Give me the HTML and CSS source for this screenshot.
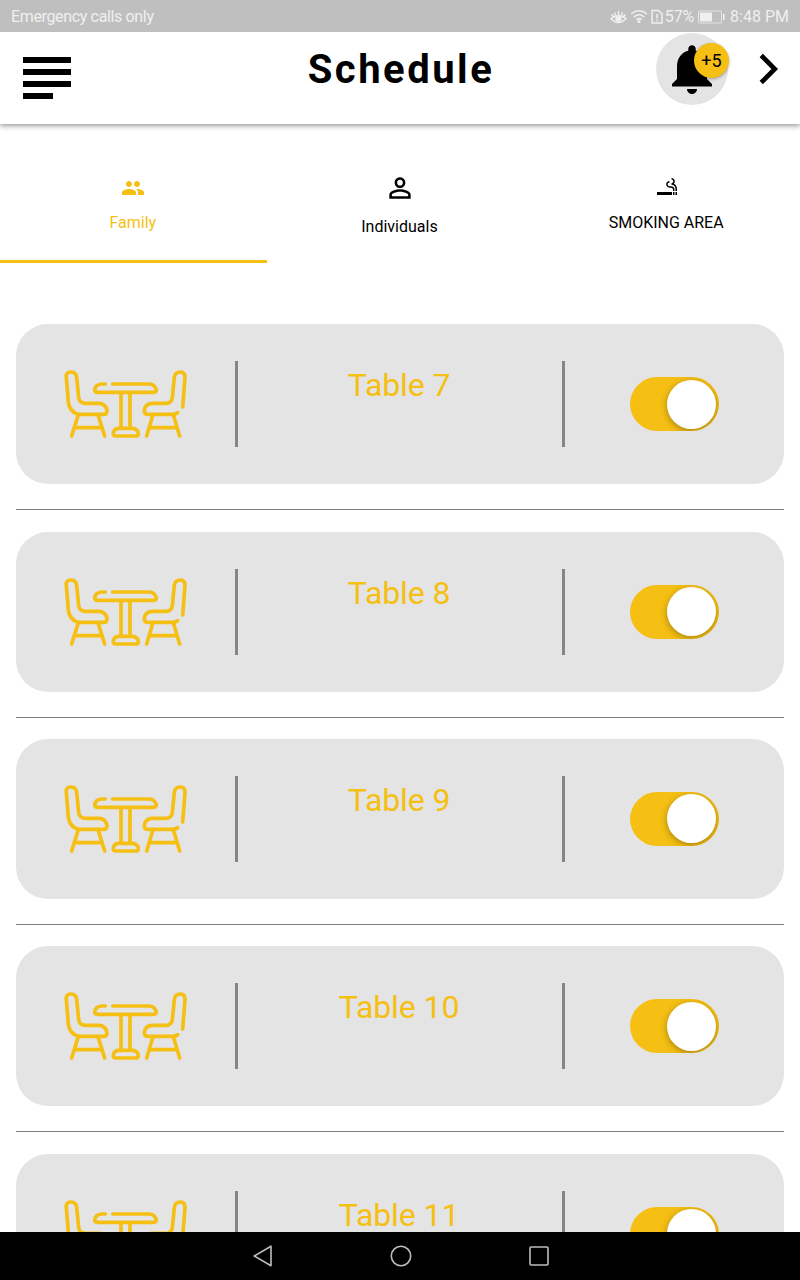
FILE: index.html
```html
<!DOCTYPE html>
<html lang="en">
<head>
<meta charset="utf-8">
<title>Schedule</title>
<link rel="stylesheet" href="styles.css">
</head>
<body>
<svg class="defs" aria-hidden="true">
  <symbol id="dining" viewBox="0 0 420 270">
    <g fill="none" stroke="currentColor" stroke-width="11" stroke-linecap="round" stroke-linejoin="round">
      <path d="M31 52Q29 36 45 36Q60 36 62 52L68 112Q70 130 90 130H130Q150 132 153 152Q153 163 142 163H72Q42 160 37 126Z"/>
      <path d="M67 164L47 228M126 164L146 228M60 203H135"/>
      <path d="M148 72H138Q118 73 116 90Q117 97 126 97H292Q301 96 301 89Q296 73 280 72H170"/>
      <path d="M195 98V203M222 98V203M187 205H232Q246 208 247 221Q246 228 240 228H178Q171 227 172 219Q174 206 187 205"/>
      <path d="M380 141L387 54Q388 36 373 36Q357 36 355 52L349 112Q347 130 329 130H288Q266 132 265 152Q265 163 277 163H350Q360 163 365 158"/>
      <path d="M291 164L272 228M352 164L371 228M283 203H361"/>
    </g>
  </symbol>
</svg>
<div class="screen">
  <div class="status">
    <span class="carrier">Emergency calls only</span>
    <div class="indicators">
      <svg class="eye" width="17" height="16" viewBox="0 0 17 16" fill="none" stroke="currentColor" stroke-width="1.500"><path d="M1.500 5.500Q3 8 5 8M15.500 5.500Q14 8 12 8M1 9.500Q8.500 3.500 16 9.500Q8.500 17.500 1 9.500ZM8.500 5.500V2M5.500 6L4.500 3.500M11.500 6L12.500 3.500"/><circle cx="8.500" cy="9.700" r="2.400" fill="currentColor"/></svg>
      <svg class="wifi" width="18" height="16" viewBox="0 0 18 16" fill="none" stroke="currentColor" stroke-width="1.500"><path d="M1 5Q9-1.500 17 5M3.700 8Q9 3.500 14.300 8M6.300 10.800Q9 8.500 11.700 10.800"/><circle cx="9" cy="12.500" r=".8" fill="currentColor"/></svg>
      <svg class="sim" width="12" height="16" viewBox="0 0 12 16" fill="none" stroke="currentColor" stroke-width="1.500"><path d="M1 1.500H7.500L11 5V14H1ZM6 5V9.500M6 10.700V12.300"/></svg>
      <span class="percent">57%</span>
      <svg class="battery" width="27" height="14" viewBox="0 0 27 14"><rect x=".5" y="1" width="23" height="12" rx="1" fill="none" stroke="currentColor" opacity=".75"/><path d="M2 2.500H14V11.500H2ZM25 4H26.500V10H25Z" fill="currentColor"/></svg>
      <span>8:48 PM</span>
    </div>
  </div>

  <header class="appbar">
    <svg class="menu" width="48" height="42" viewBox="0 0 48 42"><path d="M0 0H48V6H0ZM0 12H48V18H0ZM0 24H48V30H0ZM0 36H30V42H0Z"/></svg>
    <h1 class="title">Schedule</h1>
    <div class="alerts">
      <svg width="60" height="60" viewBox="0 0 24 24"><path d="M12 22c1.100 0 2-.9 2-2h-4c0 1.100.9 2 2 2zm6-6v-5c0-3.070-1.640-5.640-4.500-6.320V4c0-.83-.67-1.500-1.500-1.500s-1.500.67-1.500 1.500v.68C7.630 5.360 6 7.920 6 11v5l-2 2v1h16v-1l-2-2z"/></svg>
      <span class="badge">+5</span>
    </div>
    <svg class="next" width="36" height="36" viewBox="0 0 24 24"><path d="M7.500 3L16.500 12L7.500 21" fill="none" stroke="#000" stroke-width="3.100"/></svg>
  </header>

  <nav class="tabs">
    <div class="tab active">
      <svg width="24" height="24" viewBox="0 0 24 24" fill="currentColor"><path d="M16 11c1.660 0 2.990-1.340 2.990-3S17.660 5 16 5s-3 1.340-3 3 1.340 3 3 3zm-8 0c1.660 0 2.990-1.340 2.990-3S9.660 5 8 5 5 6.340 5 8s1.340 3 3 3zm0 2c-2.330 0-7 1.170-7 3.500V19h14v-2.500c0-2.330-4.670-3.500-7-3.500zm8 0c-.29 0-.62.02-.97.05 1.160.84 1.970 1.970 1.970 3.450V19h6v-2.500c0-2.330-4.670-3.500-7-3.500z"/></svg>
      <span>Family</span>
    </div>
    <div class="tab">
      <svg width="32" height="32" viewBox="0 0 24 24" fill="currentColor"><path d="M12 5.900a2.100 2.100 0 1 1 0 4.200 2.100 2.100 0 0 1 0-4.200m0 9c2.970 0 6.100 1.460 6.100 2.100v1.100H5.900V17c0-.64 3.130-2.100 6.100-2.100M12 4C9.790 4 8 5.790 8 8s1.790 4 4 4 4-1.790 4-4-1.790-4-4-4zm0 9c-2.670 0-8 1.340-8 4v3h16v-3c0-2.660-5.330-4-8-4z"/></svg>
      <span>Individuals</span>
    </div>
    <div class="tab">
      <svg width="24" height="24" viewBox="0 0 24 24" fill="currentColor"><path d="M2 16h15v3H2zm18.500 0H22v3h-1.500zM18 16h1.500v3H18zm.85-8.270c.62-.61 1-1.450 1-2.380C19.850 3.500 18.350 2 16.500 2v1.500c1.020 0 1.850.83 1.850 1.850S17.520 7.200 16.500 7.200v1.500c2.240 0 4 1.830 4 4.070V15H22v-2.240c0-2.220-1.280-4.140-3.150-5.030zm-2.820 2.470H14.500c-1.020 0-1.850-.98-1.850-2s.83-1.750 1.850-1.750v-1.500c-1.850 0-3.350 1.500-3.350 3.350s1.500 3.350 3.350 3.350h1.530c1.050 0 1.970.74 1.970 2.050V15h1.500v-1.640c0-1.810-1.460-3.160-3.470-3.160z"/></svg>
      <span>SMOKING AREA</span>
    </div>
  </nav>

  <main class="list">
    <div class="card"><svg class="dining"><use href="#dining"/></svg><i class="rule"></i><span class="name">Table 7</span><i class="rule"></i><div class="switch"><div class="thumb"></div></div></div>
    <hr class="divider">
    <div class="card"><svg class="dining"><use href="#dining"/></svg><i class="rule"></i><span class="name">Table 8</span><i class="rule"></i><div class="switch"><div class="thumb"></div></div></div>
    <hr class="divider">
    <div class="card"><svg class="dining"><use href="#dining"/></svg><i class="rule"></i><span class="name">Table 9</span><i class="rule"></i><div class="switch"><div class="thumb"></div></div></div>
    <hr class="divider">
    <div class="card"><svg class="dining"><use href="#dining"/></svg><i class="rule"></i><span class="name">Table 10</span><i class="rule"></i><div class="switch"><div class="thumb"></div></div></div>
    <hr class="divider">
    <div class="card"><svg class="dining"><use href="#dining"/></svg><i class="rule"></i><span class="name">Table 11</span><i class="rule"></i><div class="switch"><div class="thumb"></div></div></div>
  </main>

  <footer class="navbar">
    <svg width="20" height="22" viewBox="0 0 20 22"><path d="M18 1.200V20.800L1.200 11Z"/></svg>
    <svg width="22" height="22" viewBox="0 0 22 22"><circle cx="11" cy="11" r="9.700"/></svg>
    <svg width="20" height="20" viewBox="0 0 20 20"><rect x="1" y="1" width="18" height="18" rx="1"/></svg>
  </footer>
</div>
</body>
</html>
```
FILE: styles.css
```css
* { box-sizing: border-box; }
body { margin: 0; background: #fff; font-family: Roboto, "Liberation Sans", sans-serif; color: #000; }
svg { display: block; flex: none; }
.defs { width: 0; height: 0; position: absolute; }
.screen { width: 800px; height: 1280px; display: flex; flex-direction: column; overflow: hidden; }

.status { flex: none; height: 32px; background: #bfbfbf; color: #f0f0f0; display: flex; justify-content: space-between; align-items: center; padding: 1px 11px 0; font-size: 16px; line-height: 20px; z-index: 2; }
.carrier { letter-spacing: -0.350px; }
.indicators { display: flex; align-items: center; }
.wifi { margin-left: 3px; }
.sim { margin-left: 3px; }
.percent { margin-left: 2px; letter-spacing: -0.150px; }
.battery { margin: 0 5px 0 4px; }

.appbar { flex: none; height: 92px; display: grid; grid-template-columns: 144px 512px 72px 72px; align-items: start; box-shadow: 0 2px 5px rgba(0, 0, 0, .4); z-index: 1; }
.menu { margin: 25px 0 0 22.700px; }
.title { margin: 14px 0 0; padding-left: 2px; text-align: center; font-size: 40px; line-height: 48px; font-weight: 700; letter-spacing: 2.500px; }
.alerts { position: relative; width: 72px; height: 72px; margin-top: 1px; padding: 6px; border-radius: 50%; background: #e4e4e4; }
.badge { position: absolute; left: 38px; top: 10px; width: 35px; height: 35px; border-radius: 50%; background: #f5bf13; font-size: 18px; line-height: 35px; text-align: center; box-shadow: 0 1px 3px rgba(0, 0, 0, .35); }
.next { margin: 19px 0 0 22px; }

.tabs { flex: none; height: 139px; display: grid; grid-template-columns: repeat(3, 1fr); font-size: 16px; line-height: 20px; }
.tab { display: flex; flex-direction: column; align-items: center; justify-content: center; gap: 13px; padding: 25px 1px 0 0; border-bottom: 3px solid transparent; height: 139px; }
.tab svg { margin-left: 1px; }
.active { color: #f5bf13; border-color: #f5bf13; }

.list { flex: 1; min-height: 0; overflow: hidden; padding: 61.200px 16px 0; }
.card { height: 160px; border-radius: 32px; background: #e4e4e4; display: grid; grid-template-columns: 219px 3px 324px 3px 219px; color: #f5bf13; }
.dining { width: 140px; height: 90px; margin: 36px 0 0 40px; }
.rule { height: 86px; margin-top: 37px; background: #858585; }
.name { margin-top: 42px; padding-right: 2px; text-align: center; font-size: 32px; line-height: 38px; letter-spacing: -.1px; }
.switch { width: 88.500px; height: 54px; margin: 53px 0 0 65px; padding: 2.500px; border-radius: 27px; background: #f5bf13; display: flex; justify-content: flex-end; overflow: hidden; }
.thumb { width: 49px; height: 49px; border-radius: 50%; background: #fff; box-shadow: 0 2px 7px rgba(0, 0, 0, .32); }
.divider { height: 1px; border: 0; margin: 25px 0 21.400px; background: #808080; }

.navbar { flex: none; height: 48px; background: #000; display: flex; justify-content: center; align-items: center; gap: 117px; padding: 0 0 0 1px; }
.navbar svg { fill: none; stroke: #bdbdbd; stroke-width: 1.600; stroke-linejoin: round; }
```
